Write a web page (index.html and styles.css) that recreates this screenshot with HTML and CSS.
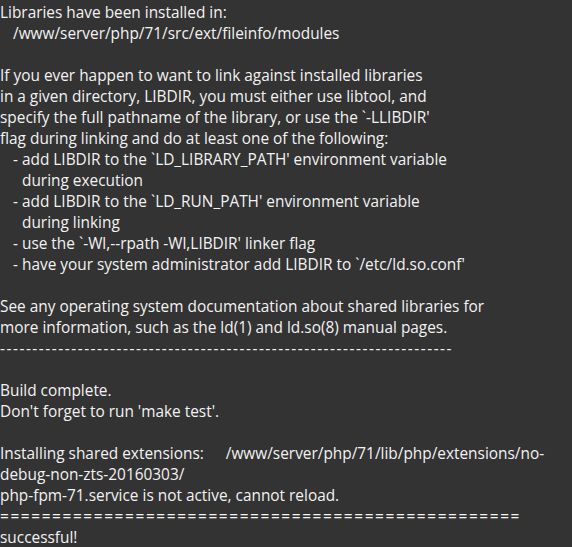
FILE: index.html
```html
<!DOCTYPE html>
<html>
<head>
<meta charset="utf-8">
<link rel="stylesheet" href="styles.css">
</head>
<body>
<div class="term">
<div class="ln">Libraries have been installed in:</div>
<div class="ln i2">/www/server/php/71/src/ext/fileinfo/modules</div>
<div class="ln"></div>
<div class="ln">If you ever happen to want to link against installed libraries</div>
<div class="ln">in a given directory, LIBDIR, you must either use libtool, and</div>
<div class="ln">specify the full pathname of the library, or use the `-LLIBDIR'</div>
<div class="ln">flag during linking and do at least one of the following:</div>
<div class="ln i2">- add LIBDIR to the `LD_LIBRARY_PATH' environment variable</div>
<div class="ln i4">during execution</div>
<div class="ln i2">- add LIBDIR to the `LD_RUN_PATH' environment variable</div>
<div class="ln i4">during linking</div>
<div class="ln i2">- use the `-Wl,--rpath -Wl,LIBDIR' linker flag</div>
<div class="ln i2">- have your system administrator add LIBDIR to `/etc/ld.so.conf'</div>
<div class="ln"></div>
<div class="ln">See any operating system documentation about shared libraries for</div>
<div class="ln">more information, such as the ld(1) and ld.so(8) manual pages.</div>
<div class="ln dash">----------------------------------------------------------------------</div>
<div class="ln"></div>
<div class="ln">Build complete.</div>
<div class="ln">Don't forget to run 'make test'.</div>
<div class="ln"></div>
<div class="ln">Installing shared extensions:<span class="gap"></span>/www/server/php/71/lib/php/extensions/no-</div>
<div class="ln">debug-non-zts-20160303/</div>
<div class="ln">php-fpm-71.service is not active, cannot reload.</div>
<div class="ln eq">==================================================</div>
<div class="ln">successful!</div>
</div>
</body>
</html>
```

FILE: styles.css
```css
html, body {
  margin: 0;
  padding: 0;
  background: #333333;
}
.term {
  padding: 2px 0 0 0;
  font-family: "Open Sans", "Noto Sans", sans-serif;
  font-size: 15.4px;
  color: #f2f2f2;
}
.ln {
  height: 21px;
  line-height: 21px;
  white-space: pre;
}
.i2 { padding-left: 13px; }
.i4 { padding-left: 22px; }
.gap { display: inline-block; width: 22px; }
.dash { letter-spacing: 1.52px; }
.eq { letter-spacing: 1.62px; }
```
